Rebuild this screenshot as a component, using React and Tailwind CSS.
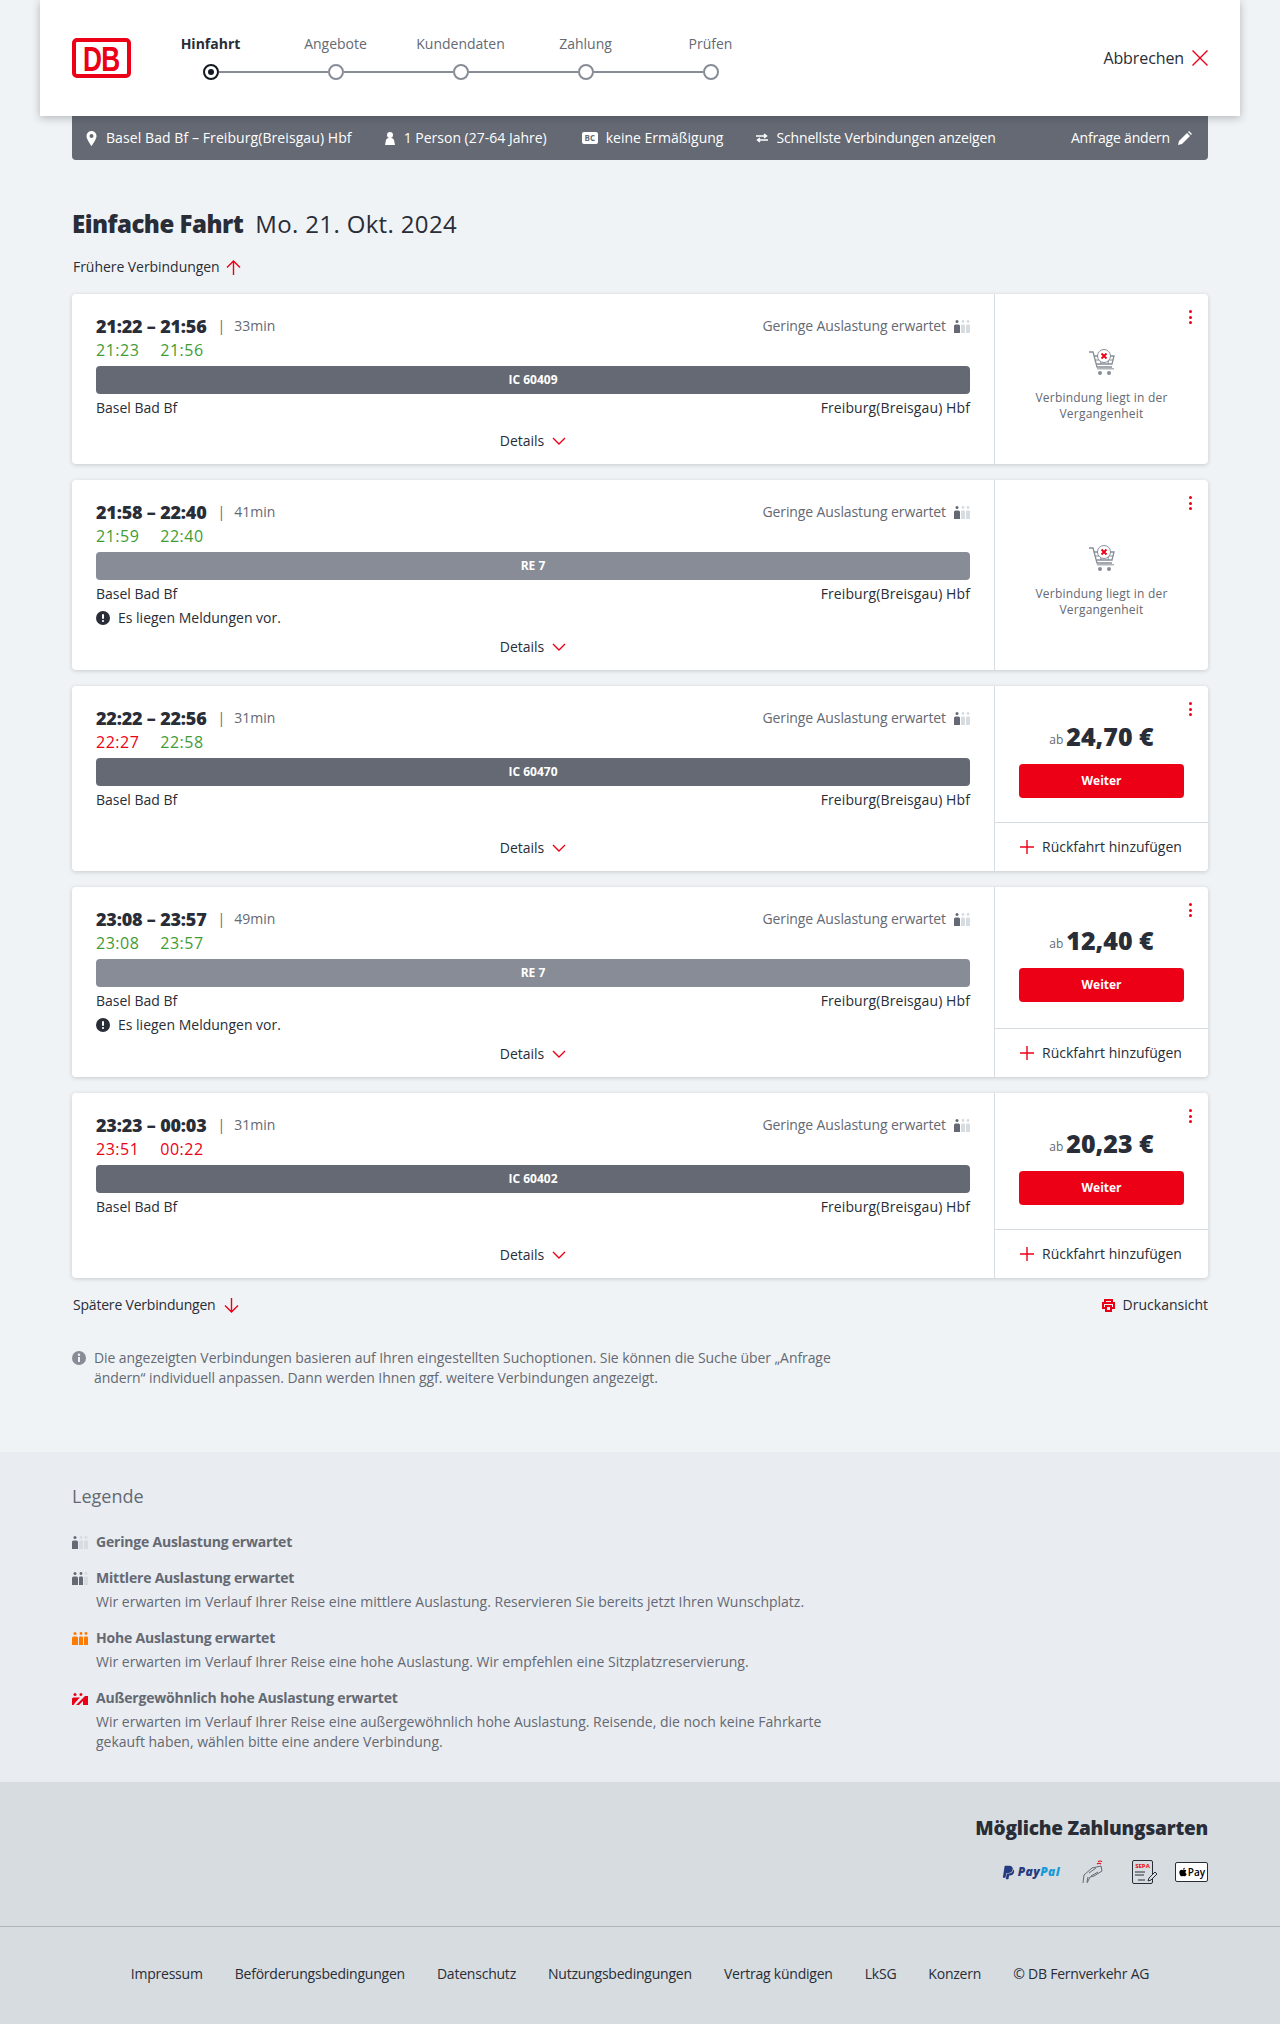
import React from "react";
import { FaPaypal, FaApple } from "react-icons/fa";

const connections = [
  { time: "21:22 – 21:56", dur: "33min", real: ["21:23", "21:56"], late: [false, false], train: "IC 60409", dark: true, past: true },
  { time: "21:58 – 22:40", dur: "41min", real: ["21:59", "22:40"], late: [false, false], train: "RE 7", dark: false, past: true, msg: true },
  { time: "22:22 – 22:56", dur: "31min", real: ["22:27", "22:58"], late: [true, false], train: "IC 60470", dark: true, price: "24,70 €" },
  { time: "23:08 – 23:57", dur: "49min", real: ["23:08", "23:57"], late: [false, false], train: "RE 7", dark: false, price: "12,40 €", msg: true },
  { time: "23:23 – 00:03", dur: "31min", real: ["23:51", "00:22"], late: [true, true], train: "IC 60402", dark: true, price: "20,23 €" },
];

const steps = ["Hinfahrt", "Angebote", "Kundendaten", "Zahlung", "Prüfen"];

const footerLinks = [
  "Impressum",
  "Beförderungsbedingungen",
  "Datenschutz",
  "Nutzungsbedingungen",
  "Vertrag kündigen",
  "LkSG",
  "Konzern",
  "© DB Fernverkehr AG",
];

// Thin red line icons, all share the same stroke
function RedIcon({ w, h, d, className = "" }) {
  return (
    <svg width={w} height={h} viewBox={`0 0 ${w} ${h}`} fill="none" stroke="#ec0016" strokeWidth="1.4" className={`shrink-0 ${className}`}>
      <path d={d} />
    </svg>
  );
}

// level: how many of the three figures are filled
function Occupancy({ level = 1, color = "#646973", light = "#d7dce1" }) {
  const fill = (i) => (i < level ? color : light);
  return (
    <svg width="16" height="13" viewBox="0 0 16 13" className="shrink-0">
      <circle cx="3" cy="1.5" r="1.5" fill={fill(0)} />
      <path d="M0 6a1.5 1.5 0 0 1 1.5-1.5h3A1.5 1.5 0 0 1 6 6v7H0z" fill={fill(0)} />
      <circle cx="9" cy="1.5" r="1.4" fill={fill(1)} />
      <path d="M7 5.5a1 1 0 0 1 1-1h2a1 1 0 0 1 1 1V13H7z" fill={fill(1)} />
      <circle cx="14" cy="1.5" r="1.4" fill={fill(2)} />
      <path d="M12 5.5a1 1 0 0 1 1-1h2a1 1 0 0 1 1 1V13h-4z" fill={fill(2)} />
    </svg>
  );
}

function OverloadIcon() {
  return (
    <svg width="16" height="13" viewBox="0 0 16 13" className="shrink-0">
      <circle cx="3" cy="2.500" r="1.500" fill="#ec0016" />
      <circle cx="9" cy="2.500" r="1.500" fill="#ec0016" />
      <path d="M0 7a1.500 1.500 0 0 1 1.500-1.500H8L1.500 13H0z" fill="#ec0016" />
      <path d="M4 13l9-9h3v9h-5V9l-4 4z" fill="#ec0016" />
      <path d="M3 12L14 0" stroke="#e9ecf0" strokeWidth="1.200" />
    </svg>
  );
}

function CartIcon() {
  return (
    <svg width="26" height="26" viewBox="0 0 26 26" className="shrink-0">
      <path d="M0 3h4l4 15h15" fill="none" stroke="#878c96" strokeWidth="1.3" />
      <path d="M5 7h20l-2 8H7.5" fill="none" stroke="#878c96" strokeWidth="1.3" />
      <path d="M6 11h18M11 7l1 8M20 7l-1 8" stroke="#878c96" strokeWidth="1" />
      <rect x="8" y="19" width="17" height="1.5" fill="#afb4bb" />
      <circle cx="11" cy="24" r="2" fill="#878c96" />
      <circle cx="20" cy="24" r="2" fill="#878c96" />
      <circle cx="15" cy="7" r="6.5" fill="#fff" stroke="#878c96" strokeWidth="1" />
      <path d="M12.5 4.500l5 5M17.500 4.500l-5 5" stroke="#ec0016" strokeWidth="1.8" />
    </svg>
  );
}

function ConnectionCard({ c }) {
  return (
    <div className="flex rounded bg-white shadow-[0_1px_4px_rgba(40,45,55,0.2)]">
      <div className="flex w-[923px] shrink-0 flex-col border-r border-[#d7dce1] pl-6 pr-6 pt-5 pb-[11px]">
        <div className="flex h-6 items-center justify-between">
          <div className="flex items-center">
            <span className="text-[18px] font-black tracking-[-0.2px] text-[#282d37]">{c.time}</span>
            <span className="ml-[11px] text-sm text-[#646973]">|</span>
            <span className="ml-[9px] text-sm text-[#646973]">{c.dur}</span>
          </div>
          <div className="flex items-center gap-2 text-sm tracking-[-0.1px] text-[#646973]">
            Geringe Auslastung erwartet
            <Occupancy />
          </div>
        </div>
        <div className="flex h-6 items-center gap-[21px] text-base tracking-[0.5px]">
          {c.real.map((t, i) => (
            <span key={i} className={c.late[i] ? "text-[#ec0016]" : "text-[#3f9c35]"}>
              {t}
            </span>
          ))}
        </div>
        <div
          className={`mt-1 flex h-7 items-center justify-center rounded text-xs font-bold text-white ${
            c.dark ? "bg-[#646973]" : "bg-[#878c96]"
          }`}
        >
          {c.train}
        </div>
        <div className="mt-1 mb-1 flex h-5 items-center justify-between text-sm text-[#282d37]">
          <span>Basel Bad Bf</span>
          <span className="tracking-[0.1px]">Freiburg(Breisgau) Hbf</span>
        </div>
        {c.msg && (
          <div className="flex h-5 items-center gap-2 text-sm text-[#282d37]">
            <svg width="14" height="14" viewBox="0 0 14 14">
              <circle cx="7" cy="7" r="7" fill="#282d37" />
              <rect x="6" y="3" width="2" height="5" rx="1" fill="#fff" />
              <circle cx="7" cy="10" r="1.1" fill="#fff" />
            </svg>
            Es liegen Meldungen vor.
          </div>
        )}
        <div className="mt-auto flex items-center justify-center gap-2 pt-[7px] text-sm text-[#282d37]">
          <span className="flex h-6 items-center">Details</span>
          <RedIcon w={14} h={8} d="M1 1l6 6 6-6" />
        </div>
      </div>
      <div className="relative flex flex-1 flex-col">
        <div className="absolute right-4 top-[16px] flex flex-col gap-[2.5px]">
          <span className="h-[3px] w-[3px] rounded-full bg-[#ec0016]" />
          <span className="h-[3px] w-[3px] rounded-full bg-[#ec0016]" />
          <span className="h-[3px] w-[3px] rounded-full bg-[#ec0016]" />
        </div>
        {c.past ? (
          <div className="flex flex-1 flex-col items-center justify-center pt-[13px]">
            <CartIcon />
            <p className="mt-[15px] w-[160px] text-center text-xs leading-4 tracking-[0.2px] text-[#646973]">
              Verbindung liegt in der Vergangenheit
            </p>
          </div>
        ) : (
          <>
            <div className="flex flex-1 flex-col items-center justify-center border-b border-[#d7dce1] pt-[35px] pb-6">
              <div className="flex h-8 items-center">
                <span className="mt-[6px] text-xs text-[#646973]">ab</span>
                <span className="ml-[3px] text-[25px] font-black text-[#282d37]">{c.price}</span>
              </div>
              <button className="mt-[11px] h-[34px] w-[165px] rounded bg-[#ec0016] text-xs font-bold text-white">
                Weiter
              </button>
            </div>
            <div className="flex h-12 items-center gap-2 pl-[25px] text-sm text-[#282d37]">
              <RedIcon w={14} h={14} d="M7 0v14M0 7h14" />
              Rückfahrt hinzufügen
            </div>
          </>
        )}
      </div>
    </div>
  );
}

function LegendRow({ icon, title, children }) {
  return (
    <div className="flex gap-2">
      <div className="flex h-5 w-4 shrink-0 items-center">{icon}</div>
      <div className="text-sm text-[#646973]">
        <div className="h-5 font-bold leading-5 tracking-[-0.2px]">{title}</div>
        {children && <p className="mt-1 w-[740px] leading-5">{children}</p>}
      </div>
    </div>
  );
}

export default function App() {
  return (
    <div className="flex h-[2024px] flex-col bg-[#f0f3f5] font-['Open_Sans',sans-serif]">
      {/* Header */}
      <header className="relative z-10 mx-10 flex h-[116px] items-center bg-white px-8 shadow-[0_2px_8px_rgba(40,45,55,0.3)]">
        <div className="flex h-10 w-[59px] shrink-0 items-center justify-center overflow-hidden rounded-[5px] border-[4px] border-[#ec0016] font-['Liberation_Sans',sans-serif] text-[35px] font-bold leading-none text-[#ec0016]">
          <span className="inline-block scale-x-75 tracking-[-1px]">DB</span>
        </div>
        <div className="ml-[17px] flex pb-[2px]">
          {steps.map((s, i) => (
            <div key={s} className="flex w-[125px] flex-col items-center">
              <span className={`h-5 text-sm leading-5 ${i === 0 ? "font-bold text-[#282d37]" : "text-[#646973]"}`}>{s}</span>
              <div className="mt-[10px] flex w-full items-center">
                <div className={`h-0.5 flex-1 ${i === 0 ? "bg-transparent" : "bg-[#878c96]"}`} />
                <div
                  className={`flex h-4 w-4 shrink-0 items-center justify-center rounded-full border-2 bg-white ${
                    i === 0 ? "border-[#131821]" : "border-[#878c96]"
                  }`}
                >
                  {i === 0 && <div className="h-1.5 w-1.5 rounded-full bg-[#131821]" />}
                </div>
                <div className={`h-0.5 flex-1 ${i === 4 ? "bg-transparent" : "bg-[#878c96]"}`} />
              </div>
            </div>
          ))}
        </div>
        <div className="ml-auto flex items-center gap-2 text-base tracking-[-0.1px] text-[#282d37]">
          Abbrechen
          <RedIcon w={16} h={16} d="M0.500 0.500l15 15M15.500 0.500l-15 15" />
        </div>
      </header>

      {/* Search summary */}
      <div className="mx-[72px] flex h-11 items-center rounded-b bg-[#646973] pl-[14px] pr-[16px] text-sm text-white">
        <svg width="11" height="15" viewBox="0 0 11 15" fill="#fff">
          <path d="M5.5 0A5 5 0 0 0 .5 5c0 3.5 5 10 5 10s5-6.500 5-10a5 5 0 0 0-5-5zm0 7a2 2 0 1 1 0-4 2 2 0 0 1 0 4z" />
        </svg>
        <span className="ml-[9px] tracking-[0.08px]">Basel Bad Bf – Freiburg(Breisgau) Hbf</span>
        <svg className="ml-[32px]" width="12" height="13" viewBox="0 0 12 13" fill="#fff">
          <circle cx="6" cy="3" r="3" />
          <path d="M1 13l1-5a3 3 0 0 1 3-2h2a3 3 0 0 1 3 2l1 5z" />
        </svg>
        <span className="ml-2">1 Person (27-64 Jahre)</span>
        <span className="ml-[35px] flex h-3 w-4 items-center justify-center rounded-[2px] bg-white text-[8px] font-bold text-[#646973]">BC</span>
        <span className="ml-2">keine Ermäßigung</span>
        <svg className="ml-[33px]" width="12" height="10" viewBox="0 0 12 10" fill="none" stroke="#fff" strokeWidth="1.5">
          <path d="M0 3h10M8 1l2.500 2L8 5M12 7H2M4 5L1.500 7 4 9" />
        </svg>
        <span className="ml-2 tracking-[-0.15px]">Schnellste Verbindungen anzeigen</span>
        <span className="ml-auto tracking-[-0.2px]">Anfrage ändern</span>
        <svg className="ml-2" width="14" height="14" viewBox="0 0 14 14" fill="#fff">
          <path d="M0 14l1-4 8-8 3 3-8 8zM10 1l1-1 3 3-1 1z" />
        </svg>
      </div>

      {/* Connections */}
      <main className="mx-[72px] flex-1">
        <h1 className="mt-[48px] flex h-8 items-center text-2xl text-[#282d37]">
          <span className="font-black tracking-[-0.5px]">Einfache Fahrt</span>
          <span className="ml-3 tracking-[0.35px]">Mo. 21. Okt. 2024</span>
        </h1>
        <div className="mt-[17px] flex h-5 items-center gap-[6px] pl-px text-sm tracking-[-0.05px] text-[#282d37]">
          Frühere Verbindungen
          <RedIcon w={15} h={15} d="M7.500 15V1M1 7.500l6.500-6.500 6.500 6.500" />
        </div>
        <div className="mt-[17px] flex flex-col gap-4">
          {connections.map((c) => (
            <ConnectionCard key={c.time} c={c} />
          ))}
        </div>
        <div className="mt-[17px] flex h-5 items-center text-sm text-[#282d37]">
          <span className="pl-px tracking-[-0.2px]">Spätere Verbindungen</span>
          <RedIcon w={15} h={15} d="M7.500 0v14M1 7.500L7.500 14 14 7.500" className="ml-2" />
          <svg className="ml-auto" width="13" height="13" viewBox="0 0 13 13" fill="none" stroke="#ec0016" strokeWidth="2">
            <path d="M3 4V1h7v3M3 9H1V4h11v5h-2" />
            <rect x="4" y="7" width="5" height="5" />
          </svg>
          <span className="ml-2">Druckansicht</span>
        </div>
        <div className="mt-[33px] flex gap-2 text-sm tracking-[-0.08px] text-[#646973]">
          <svg className="mt-[3px] shrink-0" width="14" height="14" viewBox="0 0 14 14">
            <circle cx="7" cy="7" r="7" fill="#878c96" />
            <circle cx="7" cy="3.800" r="1.200" fill="#f0f3f5" />
            <rect x="6" y="6" width="2" height="5" fill="#f0f3f5" />
          </svg>
          <p className="w-[750px] leading-5">
            Die angezeigten Verbindungen basieren auf Ihren eingestellten Suchoptionen. Sie können die Suche über „Anfrage
            ändern“ individuell anpassen. Dann werden Ihnen ggf. weitere Verbindungen angezeigt.
          </p>
        </div>
      </main>

      {/* Legend */}
      <section className="h-[330px] bg-[#e9ecf0] px-[72px] pt-[31px]">
        <h2 className="h-[26px] text-lg leading-[26px] text-[#646973]">Legende</h2>
        <div className="mt-[23px] flex flex-col gap-4">
          <LegendRow icon={<Occupancy level={1} />} title="Geringe Auslastung erwartet" />
          <LegendRow icon={<Occupancy level={2} />} title="Mittlere Auslastung erwartet">
            Wir erwarten im Verlauf Ihrer Reise eine mittlere Auslastung. Reservieren Sie bereits jetzt Ihren Wunschplatz.
          </LegendRow>
          <LegendRow icon={<Occupancy level={3} color="#ff7a00" />} title="Hohe Auslastung erwartet">
            Wir erwarten im Verlauf Ihrer Reise eine hohe Auslastung. Wir empfehlen eine Sitzplatzreservierung.
          </LegendRow>
          <LegendRow icon={<OverloadIcon />} title="Außergewöhnlich hohe Auslastung erwartet">
            Wir erwarten im Verlauf Ihrer Reise eine außergewöhnlich hohe Auslastung. Reisende, die noch keine Fahrkarte
            gekauft haben, wählen bitte eine andere Verbindung.
          </LegendRow>
        </div>
      </section>

      {/* Payment */}
      <section className="h-[145px] border-b border-[#afb4bb] bg-[#d7dce1] px-[72px] pt-[31px]">
        <h2 className="h-[30px] text-right text-[19px] font-extrabold leading-[30px] tracking-[-0.2px] text-[#282d37]">Mögliche Zahlungsarten</h2>
        <div className="mt-[17px] flex h-6 items-center justify-end">
          <FaPaypal size={15} className="text-[#253b80]" />
          <span className="ml-[2px] text-[12px] font-extrabold italic tracking-[0.4px] text-[#253b80]">
            Pay<span className="text-[#179bd7]">Pal</span>
          </span>
          <svg className="ml-[22px]" width="22" height="24" viewBox="0 0 22 24" fill="none" stroke="#646973" strokeWidth="1">
            <path d="M1 23l1-8 8-7 9-2 1 5-8 5-4 1-3 6" />
            <path d="M7 13l7-5M9 16l7-4M5 22l1-5" />
            <path d="M15 4q2-1.500 4 0M16 1.500q2-1 4 0" stroke="#ec0016" strokeWidth="1.200" />
          </svg>
          <div className="relative ml-[28px] h-6 w-[26px]">
            <div className="h-6 w-[21px] rounded-[2px] border border-[#282d37] text-center text-[6px] font-bold leading-[10px] text-[#ec0016]">
              SEPA
            </div>
            <svg className="absolute left-[2px] top-[10px]" width="24" height="13" viewBox="0 0 24 13" fill="#d7dce1" stroke="#282d37">
              <path d="M1 2h10M1 5h9M4 10h7" fill="none" />
              <path d="M14 11l1-3 6-6 2 2-6 6z" />
            </svg>
          </div>
          <div className="ml-[17px] flex h-5 w-[33px] items-center justify-center rounded-[2px] border border-[#282d37] bg-white text-[10px] font-semibold text-black">
            <FaApple size={10} />
            Pay
          </div>
        </div>
      </section>

      {/* Footer */}
      <footer className="flex h-[97px] items-center justify-center gap-8 bg-[#d7dce1] pb-[3px] text-sm tracking-[-0.22px] text-[#282d37]">
        {footerLinks.map((l) => (
          <span key={l}>{l}</span>
        ))}
      </footer>
    </div>
  );
}
